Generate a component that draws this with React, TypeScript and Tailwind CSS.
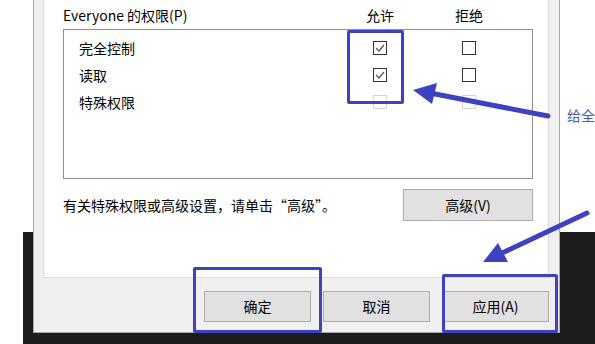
import React from "react";

const font = "font-['Noto_Sans_CJK_SC','Noto_Sans',sans-serif]";

function CheckBox({ checked, disabled }: { checked?: boolean; disabled?: boolean }) {
  return (
    <div
      className={`w-[14px] h-[14px] border bg-white flex items-center justify-center ${
        disabled ? "border-[#d6d6d6]" : "border-[#333333]"
      }`}
    >
      {checked && (
        <svg width="10" height="8" viewBox="0 0 10 8">
          <polyline points="1,4 4,7 9,1" fill="none" stroke="#555" strokeWidth="1.2" />
        </svg>
      )}
    </div>
  );
}

function Row({ name, allow, disabled }: { name: string; allow?: boolean; disabled?: boolean }) {
  return (
    <div className="flex items-center h-[27px]">
      <div className="w-[272px] pl-[15px]">{name}</div>
      <div className="w-[88px] flex justify-center">
        <CheckBox checked={allow} disabled={disabled} />
      </div>
      <div className="w-[90px] flex justify-center">
        <CheckBox disabled={disabled} />
      </div>
    </div>
  );
}

function Btn({ label, className }: { label: string; className: string }) {
  return (
    <button className={`h-[31px] bg-[#e1e1e1] border border-[#adadad] text-[14px] text-black ${className}`}>
      {label}
    </button>
  );
}

export default function App() {
  return (
    <div className={`relative w-[595px] h-[344px] overflow-hidden bg-white text-[14px] text-black ${font}`}>
      {/* dark desktop behind the dialog */}
      <div className="absolute left-[23px] top-[232px] right-0 bottom-0 bg-[#1c1c1c]" />

      <div className="relative ml-[33px] w-[527px] h-[333px] bg-[#f0f0f0] border-x border-b border-[#a8a8a8] pl-[9px] pr-[10px] flex flex-col">
        <div className="h-[278px] bg-white border-x border-b border-[#dadada] pl-[19px] pr-[15px]">
          <div className="flex items-center h-[29px] leading-none">
            <div className="w-[273px]">Everyone 的权限(P)</div>
            <div className="w-[88px] text-center">允许</div>
            <div className="w-[90px] text-center">拒绝</div>
          </div>
          <div className="h-[150px] border border-[#8f8f8f] pt-[4px] leading-none">
            <Row name="完全控制" allow />
            <Row name="读取" allow />
            <Row name="特殊权限" disabled />
          </div>
          <div className="flex items-center justify-between mt-[10px]">
            <span>有关特殊权限或高级设置，请单击“高级”。</span>
            <Btn label="高级(V)" className="w-[130px] h-[32px]" />
          </div>
        </div>
        <div className="flex justify-end gap-[12px] mt-[13px]">
          <Btn label="确定" className="w-[107px]" />
          <Btn label="取消" className="w-[107px]" />
          <Btn label="应用(A)" className="w-[107px]" />
        </div>
      </div>

      {/* annotations */}
      <div className="absolute left-[347px] top-[30px] w-[57px] h-[74px] border-[3px] border-[#3d42c0] rounded-[2px]" />
      <div className="absolute left-[193px] top-[267px] w-[129px] h-[66px] border-[3px] border-[#3d42c0] rounded-[2px]" />
      <div className="absolute left-[442px] top-[274px] w-[116px] h-[59px] border-[3px] border-[#3d42c0] rounded-[2px]" />
      <svg className="absolute left-0 top-0" width="595" height="344" viewBox="0 0 595 344">
        <line x1="548" y1="116" x2="430" y2="93" stroke="#3d42c0" strokeWidth="5" strokeLinecap="round" />
        <polygon points="413,90 437,83 432,104" fill="#3d42c0" />
        <line x1="587" y1="213" x2="500" y2="254" stroke="#3d42c0" strokeWidth="5" strokeLinecap="round" />
        <polygon points="483,262 498,243 508,262" fill="#3d42c0" />
      </svg>
      <div className="absolute left-[567px] top-[105px] text-[14px] text-[#4a5aa8] whitespace-nowrap">给全</div>
    </div>
  );
}
